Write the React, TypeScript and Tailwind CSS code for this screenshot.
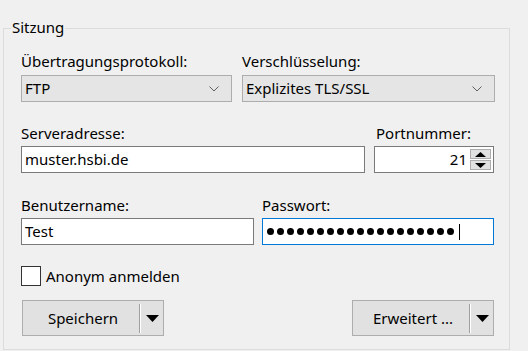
import React from "react";

const font = { fontFamily: '"Noto Sans", "Open Sans", sans-serif' };

function Chevron() {
  return (
    <svg width="10" height="6" viewBox="0 0 10 6" className="shrink-0">
      <path d="M0.5 0.5 L5 5 L9.5 0.5" fill="none" stroke="#606060" strokeWidth="1" />
    </svg>
  );
}

function Combo({ w, text }: { w: string; text: string }) {
  return (
    <div className={`${w} h-[27px] border border-[#adadad] bg-[#e5e5e5] flex items-center pl-[3px] pr-[12px] justify-between`}>
      <span className="text-[15px] leading-none text-black">{text}</span>
      <Chevron />
    </div>
  );
}

function SplitButton({ label }: { label: string }) {
  return (
    <div className="w-[142px] h-[36px] border border-[#adadad] bg-[#e1e1e1] flex items-center">
      <div className="flex-1 flex items-center justify-center text-[15px] text-black pl-[4px]">{label}</div>
      <div className="w-[2px] h-[29px] bg-[#a0a0a0] border-r border-[#ffffff]" />
      <div className="w-[22px] flex items-center justify-center">
        <svg width="13" height="7" viewBox="0 0 13 7">
          <path d="M0 0 H13 L6.5 7 Z" fill="#000" />
        </svg>
      </div>
    </div>
  );
}

export default function App() {
  return (
    <div className="w-[528px] h-[351px] bg-[#f0f0f0] pt-[28px] pl-[3px]" style={font}>
      <div className="relative w-[507px] h-[322px] border border-[#dcdcdc] pl-[17px] pt-[22px]">
        <div className="absolute left-[7px] top-[-12px] bg-[#f0f0f0] px-[1px] text-[15px] leading-[20px] text-black">
          Sitzung
        </div>
        {/* Row 1 */}
        <div className="flex gap-[10px]">
          <div className="flex flex-col gap-[4px]">
            <span className="text-[15px] leading-[20px] text-black">Übertragungsprotokoll:</span>
            <Combo w="w-[211px]" text="FTP" />
          </div>
          <div className="flex flex-col gap-[4px]">
            <span className="text-[15px] leading-[20px] text-black">Verschlüsselung:</span>
            <Combo w="w-[253px]" text="Explizites TLS/SSL" />
          </div>
        </div>
        {/* Row 2 */}
        <div className="flex gap-[9px] mt-[21px]">
          <div className="flex flex-col gap-[3px]">
            <span className="text-[15px] leading-[20px] text-black">Serveradresse:</span>
            <div className="w-[344px] h-[27px] border border-[#7a7a7a] bg-white flex items-center pl-[3px] text-[15px] text-black">
              muster.hsbi.de
            </div>
          </div>
          <div className="flex flex-col gap-[3px]">
            <span className="text-[15px] leading-[20px] text-black pl-[2px]">Portnummer:</span>
            <div className="w-[120px] h-[27px] border border-[#7a7a7a] bg-white flex items-center justify-end pr-[2px]">
              <span className="text-[15px] text-black mr-[3px]">21</span>
              <div className="flex flex-col gap-[1px]">
                <div className="w-[21px] h-[10px] border border-[#adadad] bg-[#e1e1e1] flex items-center justify-center">
                  <svg width="11" height="5" viewBox="0 0 11 5"><path d="M0 5 H11 L5.5 0 Z" fill="#000" /></svg>
                </div>
                <div className="w-[21px] h-[10px] border border-[#adadad] bg-[#e1e1e1] flex items-center justify-center">
                  <svg width="11" height="5" viewBox="0 0 11 5"><path d="M0 0 H11 L5.5 5 Z" fill="#000" /></svg>
                </div>
              </div>
            </div>
          </div>
        </div>
        {/* Row 3 */}
        <div className="flex gap-[8px] mt-[22px]">
          <div className="flex flex-col gap-[3px]">
            <span className="text-[15px] leading-[20px] text-black">Benutzername:</span>
            <div className="w-[233px] h-[27px] border border-[#7a7a7a] bg-white flex items-center pl-[3px] text-[15px] text-black">
              Test
            </div>
          </div>
          <div className="flex flex-col gap-[3px]">
            <span className="text-[15px] leading-[20px] text-black">Passwort:</span>
            <div className="w-[232px] h-[27px] border border-[#0078d7] bg-white flex items-center pl-[4px] gap-[3px]">
              {Array.from({ length: 19 }).map((_, i) => (
                <span key={i} className="w-[7px] h-[7px] rounded-full bg-black" />
              ))}
              <span className="w-[1px] h-[16px] bg-black ml-[2px]" />
            </div>
          </div>
        </div>
        {/* Checkbox */}
        <div className="flex items-center gap-[5px] mt-[21px]">
          <div className="w-[20px] h-[20px] border border-[#333333] bg-white" />
          <span className="text-[15px] leading-[20px] text-black">Anonym anmelden</span>
        </div>
        {/* Buttons */}
        <div className="flex justify-between mt-[14px] pl-[1px] w-[473px]">
          <SplitButton label="Speichern" />
          <SplitButton label="Erweitert ..." />
        </div>
      </div>
    </div>
  );
}
